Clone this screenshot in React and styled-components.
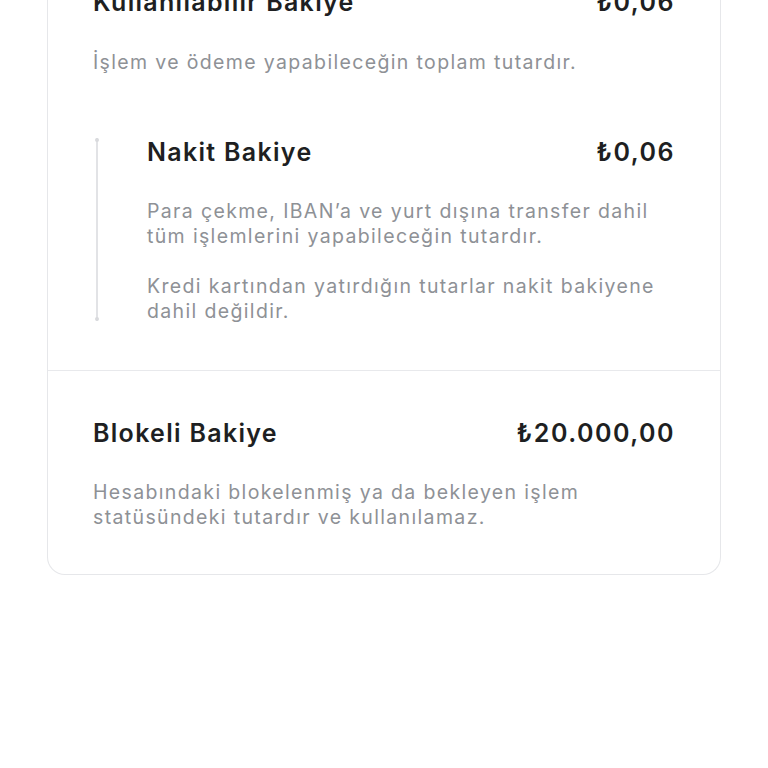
import React from "react";
import styled, { createGlobalStyle } from "styled-components";

const Global = createGlobalStyle`
  html, body { margin: 0; padding: 0; background: #ffffff; }
  body { font-family: Inter, "Noto Sans", "DejaVu Sans", sans-serif; overflow: hidden; }
`;

const Page = styled.div`
  width: 768px;
  height: 768px;
  overflow: hidden;
`;

const Card = styled.div`
  margin: -60px 47px 0;
  border: 1px solid #e6e7ea;
  border-top: none;
  border-radius: 0 0 18px 18px;
  background: #fff;
`;

const Section = styled.section`
  padding: 46px 46px ${(p) => p.$bottom ?? 46}px 45px;
  border-top: ${(p) => (p.$divided ? "1px solid #e8e9ec" : "none")};
`;

const Row = styled.div`
  display: flex;
  justify-content: space-between;
  align-items: center;
  height: 32px;
`;

const Title = styled.div`
  font-size: 25px;
  font-weight: 600;
  color: #1e1f22;
  letter-spacing: 1.3px;
`;

const Amount = styled.div`
  font-size: 25px;
  font-weight: 600;
  color: #1e1f22;
  letter-spacing: 1.5px;
  margin-right: -1px;
`;

const Desc = styled.p`
  margin: ${(p) => p.$top ?? 31}px 0 0;
  font-size: 19.5px;
  line-height: 25px;
  color: #8e9196;
  letter-spacing: 1.35px;
  white-space: nowrap;
`;

const Nested = styled.div`
  position: relative;
  margin-top: 61px;
  padding-left: 54px;
`;

const Rail = styled.div`
  position: absolute;
  left: 3px;
  top: 2px;
  bottom: 3px;
  width: 1.5px;
  background: #e2e3e6;
  &::before,
  &::after {
    content: "";
    position: absolute;
    left: -1.25px;
    width: 4px;
    height: 4px;
    border-radius: 50%;
    background: #d9dadd;
  }
  &::before { top: 0; }
  &::after { bottom: 0; }
`;

export default function App() {
  return (
    <Page>
      <Global />
      <Card>
        <Section>
          <Row>
            <Title>Kullanılabilir Bakiye</Title>
            <Amount>₺0,06</Amount>
          </Row>
          <Desc $top={32}>İşlem ve ödeme yapabileceğin toplam tutardır.</Desc>
          <Nested>
            <Rail />
            <Row>
              <Title>Nakit Bakiye</Title>
              <Amount>₺0,06</Amount>
            </Row>
            <Desc>
              Para çekme, IBAN’a ve yurt dışına transfer dahil
              <br />
              tüm işlemlerini yapabileceğin tutardır.
            </Desc>
            <Desc $top={25}>
              Kredi kartından yatırdığın tutarlar nakit bakiyene
              <br />
              dahil değildir.
            </Desc>
          </Nested>
        </Section>
        <Section $divided $bottom={44}>
          <Row>
            <Title>Blokeli Bakiye</Title>
            <Amount>₺20.000,00</Amount>
          </Row>
          <Desc>
            Hesabındaki blokelenmiş ya da bekleyen işlem
            <br />
            statüsündeki tutardır ve kullanılamaz.
          </Desc>
        </Section>
      </Card>
    </Page>
  );
}
